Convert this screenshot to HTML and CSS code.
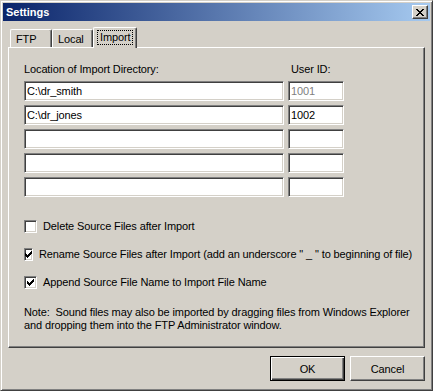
FILE: index.html
```html
<!DOCTYPE html>
<html lang="en">
<head>
    <meta charset="UTF-8">
    <title>Settings</title>
    <link rel="stylesheet" href="styles.css">
</head>
<body>
    <div class="window">
        <div class="titlebar">
            <span class="title">Settings</span>
            <button class="close-btn" aria-label="Close">
                <svg width="8" height="7" viewBox="0 0 8 7" shape-rendering="crispEdges">
                    <path d="M0 0h2v1H0z M6 0h2v1H6z M1 1h2v1H1z M5 1h2v1H5z M2 2h4v1H2z M3 3h2v1H3z M2 4h4v1H2z M1 5h2v1H1z M5 5h2v1H5z M0 6h2v1H0z M6 6h2v1H6z" fill="#000"/>
                </svg>
            </button>
        </div>

        <div class="tabs">
            <div class="tab tab-ftp">FTP</div>
            <div class="tab tab-local">Local</div>
            <div class="tab tab-import active"><span class="focus">Import</span></div>
        </div>

        <div class="panel">
            <div class="dir-head">
                <span>Location of Import Directory:</span>
                <span class="uid-label">User ID:</span>
            </div>
            <div class="dir-grid">
                <input class="field" type="text" value="C:\dr_smith">
                <input class="field dim" type="text" value="1001" readonly>
                <input class="field" type="text" value="C:\dr_jones">
                <input class="field" type="text" value="1002">
                <input class="field" type="text" value="">
                <input class="field" type="text" value="">
                <input class="field" type="text" value="">
                <input class="field" type="text" value="">
                <input class="field" type="text" value="">
                <input class="field" type="text" value="">
            </div>

            <div class="checks">
                <label class="check"><span class="box"></span>Delete Source Files after Import</label>
                <label class="check"><span class="box checked"><svg width="7" height="7" viewBox="0 0 7 7" shape-rendering="crispEdges"><path d="M0 2h1v3H0z M1 3h1v3H1z M2 4h1v3H2z M3 3h1v3H3z M4 2h1v3H4z M5 1h1v3H5z M6 0h1v3H6z" fill="#000"/></svg></span>Rename Source Files after Import (add an underscore " _ " to beginning of file)</label>
                <label class="check"><span class="box checked"><svg width="7" height="7" viewBox="0 0 7 7" shape-rendering="crispEdges"><path d="M0 2h1v3H0z M1 3h1v3H1z M2 4h1v3H2z M3 3h1v3H3z M4 2h1v3H4z M5 1h1v3H5z M6 0h1v3H6z" fill="#000"/></svg></span>Append Source File Name to Import File Name</label>
            </div>

            <p class="note">Note:&nbsp; Sound files may also be imported by dragging files from Windows Explorer<br>and dropping them into the FTP Administrator window.</p>
        </div>

        <div class="actions">
            <button class="btn default">OK</button>
            <button class="btn">Cancel</button>
        </div>
    </div>
</body>
</html>
```

FILE: styles.css
```css
body {
    margin: 0;
    background: #d4d0c8;
    font-family: "Liberation Sans", Arial, sans-serif;
    font-size: 11px;
    letter-spacing: -0.12px;
    color: #000;
}

.window {
    width: 433px;
    height: 391px;
    box-sizing: border-box;
    padding: 2px;
    border: 1px solid;
    border-color: #d4d0c8 #404040 #404040 #d4d0c8;
    box-shadow: inset 1px 1px #fff, inset -1px -1px #808080;
    background: #d4d0c8;
}

.titlebar {
    height: 18px;
    display: flex;
    align-items: center;
    justify-content: space-between;
    padding: 0 2px 0 3px;
    background: linear-gradient(to right, #0a246a, #a6caf0);
}

.title {
    color: #fff;
    font-weight: bold;
    font-size: 11px;
    line-height: 13px;
    letter-spacing: 0;
}

.close-btn {
    width: 16px;
    height: 14px;
    padding: 0;
    display: flex;
    align-items: center;
    justify-content: center;
    background: #d4d0c8;
    border: 1px solid;
    border-color: #fff #404040 #404040 #fff;
    box-shadow: inset -1px -1px #808080;
}

/* tabs */
.tabs {
    display: flex;
    align-items: flex-end;
    height: 20px;
    margin: 6px 0 0 7px;
}

.tab {
    position: relative;
    box-sizing: border-box;
    height: 18px;
    padding: 3px 0 0 5px;
    line-height: 13px;
    border-top: 1px solid #fff;
    border-left: 1px solid #fff;
    border-right: 1px solid #404040;
    border-top-left-radius: 2px;
    border-top-right-radius: 2px;
    box-shadow: inset -1px 0 #808080;
}

.tab-ftp { width: 42px; }
.tab-local { width: 41px; }

.tab-import.active {
    width: 44px;
    height: 21px;
    margin-bottom: -1px;
    padding: 2px 0 0 3px;
    background: #d4d0c8;
    z-index: 1;
}

.focus {
    display: inline-block;
    padding: 0 2px;
    border: 1px dotted #000;
    line-height: 13px;
}

/* panel */
.panel {
    box-sizing: border-box;
    height: 301px;
    margin: 0 5px;
    padding: 15px 15px 0 15px;
    border: 1px solid;
    border-color: #fff #404040 #404040 #fff;
    box-shadow: inset -1px -1px #808080;
}

.dir-head,
.dir-grid {
    display: grid;
    grid-template-columns: 260px 56px;
    column-gap: 4px;
}

.dir-head {
    line-height: 13px;
    margin-bottom: 5px;
}

.uid-label {
    padding-left: 3px;
}

.dir-grid {
    row-gap: 4px;
}

.field {
    box-sizing: border-box;
    height: 20px;
    width: 100%;
    margin: 0;
    padding: 0 2px;
    font: inherit;
    letter-spacing: inherit;
    color: #000;
    background: #fff;
    border: 1px solid;
    border-color: #808080 #fff #fff #808080;
    box-shadow: inset 1px 1px #404040, inset -1px -1px #d4d0c8;
    outline: none;
}

.field.dim {
    color: #808080;
}

.checks {
    margin-top: 23px;
    display: flex;
    flex-direction: column;
    gap: 15px;
}

.check {
    display: flex;
    align-items: center;
    height: 13px;
    line-height: 13px;
    white-space: nowrap;
}

.box {
    box-sizing: border-box;
    width: 13px;
    height: 13px;
    margin-right: 6px;
    display: flex;
    align-items: center;
    justify-content: center;
    background: #fff;
    border: 1px solid;
    border-color: #808080 #fff #fff #808080;
    box-shadow: inset 1px 1px #404040, inset -1px -1px #d4d0c8;
}

.note {
    margin: 17px 0 0;
    line-height: 13px;
    white-space: nowrap;
}

/* buttons */
.actions {
    display: flex;
    justify-content: flex-end;
    gap: 5px;
    margin-top: 8px;
    padding-right: 5px;
}

.btn {
    box-sizing: border-box;
    width: 75px;
    height: 25px;
    padding: 0;
    font: inherit;
    letter-spacing: inherit;
    color: #000;
    background: #d4d0c8;
    border: 1px solid;
    border-color: #fff #404040 #404040 #fff;
    box-shadow: inset -1px -1px #808080;
}

.btn.default {
    border-color: #000;
    box-shadow: inset 1px 1px #fff, inset -1px -1px #404040, inset -2px -2px #808080;
}
```
